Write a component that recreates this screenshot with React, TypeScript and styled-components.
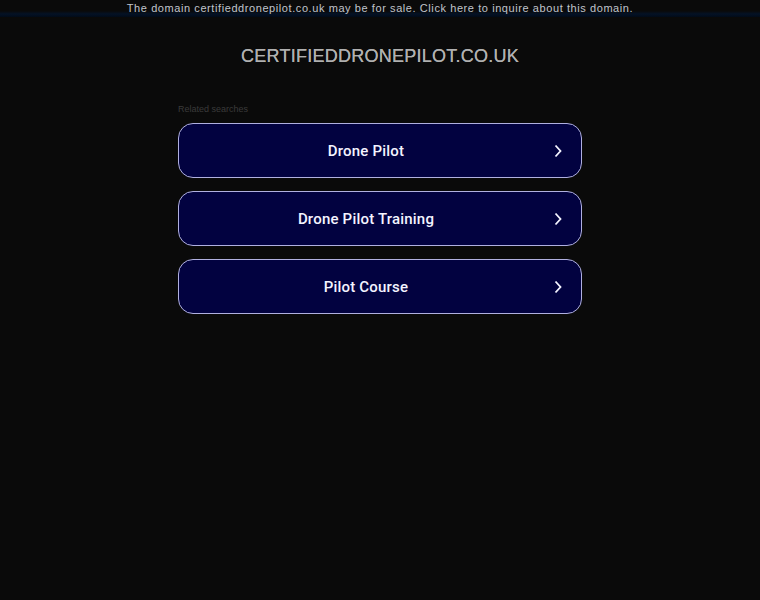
import React from 'react';
import styled, { createGlobalStyle } from 'styled-components';

const searches = ['Drone Pilot', 'Drone Pilot Training', 'Pilot Course'];

const GlobalStyle = createGlobalStyle`
  html, body {
    margin: 0;
    padding: 0;
    background: #0a0a0a;
  }
  body {
    font-family: "Liberation Sans", Arial, sans-serif;
  }
`;

const Page = styled.div`
  min-height: 600px;
  background: #0a0a0a;
  display: flex;
  flex-direction: column;
  align-items: center;
`;

const TopBar = styled.a`
  display: block;
  width: 100%;
  height: 17px;
  box-sizing: border-box;
  padding-top: 2px;
  text-align: center;
  font-size: 11px;
  line-height: 12px;
  letter-spacing: 0.58px;
  color: #c0c4cc;
  text-decoration: none;
  background: linear-gradient(to bottom, #0a0a0a 0, #0a0a0a 11px, #041226 14px, #020b18 17px);
`;

const DomainTitle = styled.h1`
  margin: 29px 0 0;
  font-size: 18px;
  font-weight: normal;
  letter-spacing: 0.25px;
  color: #b0b0b0;
  line-height: 20px;
  text-shadow: 0 0 0.4px #b0b0b0;
`;

const Content = styled.div`
  width: 404px;
  margin-top: 37px;
  display: flex;
  flex-direction: column;
`;

const Label = styled.div`
  font-size: 9px;
  color: #3a3a3a;
  line-height: 12px;
  margin-bottom: 8px;
`;

const List = styled.div`
  display: flex;
  flex-direction: column;
  gap: 13px;
`;

const SearchButton = styled.a`
  height: 55px;
  box-sizing: border-box;
  display: flex;
  align-items: center;
  border: 1px solid #b0b0e0;
  border-radius: 15px;
  background: #020240;
  color: #f4f4ff;
  text-decoration: none;
  padding: 0 18px 0 0;
`;

const ButtonText = styled.span`
  flex: 1;
  text-align: center;
  font-family: Roboto, "Liberation Sans", Arial, sans-serif;
  font-size: 15px;
  font-weight: 500;
  letter-spacing: 0.2px;
`;

const Chevron = () => (
  <svg width="10" height="14" viewBox="0 0 10 14">
    <path d="M2.5 1.5 L7.5 7 L2.5 12.5" fill="none" stroke="#f4f4ff" strokeWidth="1.8" />
  </svg>
);

export default function App() {
  return (
    <Page>
      <GlobalStyle />
      <TopBar href="#">
        The domain certifieddronepilot.co.uk may be for sale. Click here to inquire about this domain.
      </TopBar>
      <DomainTitle>CERTIFIEDDRONEPILOT.CO.UK</DomainTitle>
      <Content>
        <Label>Related searches</Label>
        <List>
          {searches.map((s) => (
            <SearchButton key={s} href="#">
              <ButtonText>{s}</ButtonText>
              <Chevron />
            </SearchButton>
          ))}
        </List>
      </Content>
    </Page>
  );
}
